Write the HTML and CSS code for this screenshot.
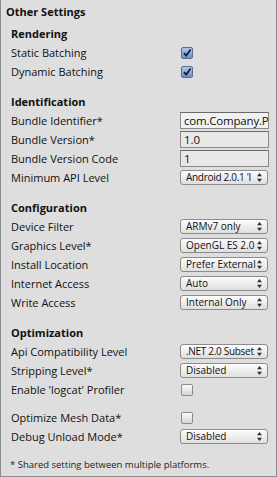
FILE: index.html
```html
<!DOCTYPE html>
<html lang="en">
<head>
    <meta charset="UTF-8">
    <title>Other Settings</title>
    <link rel="stylesheet" href="styles.css">
</head>
<body>
    <div id="panel">
        <div class="title">Other Settings</div>

        <div class="section">
            <div class="sectionHead">Rendering</div>
            <div class="row"><span class="label">Static Batching</span><span class="check on"><svg viewBox="0 0 12 12" width="12" height="12"><path d="M3 6.2 L5.2 8.6 L9.6 2.4" fill="none" stroke="#14213d" stroke-width="1.8"/></svg></span></div>
            <div class="row"><span class="label">Dynamic Batching</span><span class="check on"><svg viewBox="0 0 12 12" width="12" height="12"><path d="M3 6.2 L5.2 8.6 L9.6 2.4" fill="none" stroke="#14213d" stroke-width="1.8"/></svg></span></div>
        </div>

        <div class="section">
            <div class="sectionHead">Identification</div>
            <div class="row"><span class="label">Bundle Identifier*</span><span class="field active">com.Company.P</span></div>
            <div class="row"><span class="label">Bundle Version*</span><span class="field">1.0</span></div>
            <div class="row"><span class="label">Bundle Version Code</span><span class="field">1</span></div>
            <div class="row"><span class="label">Minimum API Level</span><span class="popup"><span class="popupText tight">Android 2.0.1 'I</span><svg class="arrows" viewBox="0 0 5 9" width="5" height="9"><path d="M2.5 0 L5 3.2 L0 3.2 Z M2.5 9 L5 5.8 L0 5.8 Z" fill="#333"/></svg></span></div>
        </div>

        <div class="section">
            <div class="sectionHead">Configuration</div>
            <div class="row"><span class="label">Device Filter</span><span class="popup"><span class="popupText">ARMv7 only</span><svg class="arrows" viewBox="0 0 5 9" width="5" height="9"><path d="M2.5 0 L5 3.2 L0 3.2 Z M2.5 9 L5 5.8 L0 5.8 Z" fill="#333"/></svg></span></div>
            <div class="row"><span class="label">Graphics Level*</span><span class="popup"><span class="popupText">OpenGL ES 2.0</span><svg class="arrows" viewBox="0 0 5 9" width="5" height="9"><path d="M2.5 0 L5 3.2 L0 3.2 Z M2.5 9 L5 5.8 L0 5.8 Z" fill="#333"/></svg></span></div>
            <div class="row"><span class="label">Install Location</span><span class="popup"><span class="popupText">Prefer External</span><svg class="arrows" viewBox="0 0 5 9" width="5" height="9"><path d="M2.5 0 L5 3.2 L0 3.2 Z M2.5 9 L5 5.8 L0 5.8 Z" fill="#333"/></svg></span></div>
            <div class="row"><span class="label">Internet Access</span><span class="popup"><span class="popupText">Auto</span><svg class="arrows" viewBox="0 0 5 9" width="5" height="9"><path d="M2.5 0 L5 3.2 L0 3.2 Z M2.5 9 L5 5.8 L0 5.8 Z" fill="#333"/></svg></span></div>
            <div class="row"><span class="label">Write Access</span><span class="popup"><span class="popupText">Internal Only</span><svg class="arrows" viewBox="0 0 5 9" width="5" height="9"><path d="M2.5 0 L5 3.2 L0 3.2 Z M2.5 9 L5 5.8 L0 5.8 Z" fill="#333"/></svg></span></div>
        </div>

        <div class="section">
            <div class="sectionHead">Optimization</div>
            <div class="row"><span class="label">Api Compatibility Level</span><span class="popup"><span class="popupText tight">.NET 2.0 Subset</span><svg class="arrows" viewBox="0 0 5 9" width="5" height="9"><path d="M2.5 0 L5 3.2 L0 3.2 Z M2.5 9 L5 5.8 L0 5.8 Z" fill="#333"/></svg></span></div>
            <div class="row"><span class="label">Stripping Level*</span><span class="popup"><span class="popupText">Disabled</span><svg class="arrows" viewBox="0 0 5 9" width="5" height="9"><path d="M2.5 0 L5 3.2 L0 3.2 Z M2.5 9 L5 5.8 L0 5.8 Z" fill="#333"/></svg></span></div>
            <div class="row"><span class="label">Enable 'logcat' Profiler</span><span class="check"></span></div>
        </div>

        <div class="section small">
            <div class="row"><span class="label">Optimize Mesh Data*</span><span class="check"></span></div>
            <div class="row"><span class="label">Debug Unload Mode*</span><span class="popup"><span class="popupText">Disabled</span><svg class="arrows" viewBox="0 0 5 9" width="5" height="9"><path d="M2.5 0 L5 3.2 L0 3.2 Z M2.5 9 L5 5.8 L0 5.8 Z" fill="#333"/></svg></span></div>
        </div>

        <div class="footnote">* Shared setting between multiple platforms.</div>
    </div>
</body>
</html>
```

FILE: styles.css
```css
body {
    margin: 0;
    background-color: #dedede;
    font-family: "Open Sans", sans-serif;
    font-size: 11px;
    color: #111;
}

#panel {
    width: 277px;
    height: 477px;
    box-sizing: border-box;
    border: 1px solid #8c8c8c;
    border-top: none;
    background-color: #dedede;
    padding-top: 2px;
}

.title {
    height: 19px;
    line-height: 19px;
    padding-left: 5px;
    font-weight: bold;
    margin-bottom: 4px;
}

.section {
    margin-bottom: 12px;
}

.section.small {
    margin-top: -3px;
    margin-bottom: 12px;
}

.sectionHead {
    height: 18px;
    line-height: 18px;
    padding-left: 10px;
    font-weight: bold;
}

.row {
    display: flex;
    align-items: center;
    height: 19px;
    padding-left: 10px;
}

.label {
    width: 169px;
    flex-shrink: 0;
    line-height: 19px;
    white-space: nowrap;
}

.check {
    width: 12px;
    height: 12px;
    margin-left: 1px;
    margin-top: 1px;
    box-sizing: border-box;
    border: 1px solid #8a8a8a;
    border-radius: 2px;
    background: linear-gradient(#fcfcfc, #d4d4d4);
    position: relative;
}

.check.on {
    border-color: #5b6f90;
    background: linear-gradient(#b3c8e6, #6c8fc4);
}

.check svg {
    position: absolute;
    left: -1px;
    top: -1px;
}

.field {
    width: 89px;
    height: 17px;
    box-sizing: border-box;
    border: 1px solid #8a8a8a;
    border-top-color: #6a6a6a;
    background-color: #e8e8e8;
    padding-left: 3px;
    font-size: 11.5px;
    line-height: 15px;
    white-space: nowrap;
    overflow: hidden;
}

.field.active {
    background-color: #f1f1f1;
    letter-spacing: -0.2px;
}

.popup {
    width: 88px;
    height: 15px;
    box-sizing: border-box;
    border: 1px solid #8c8c8c;
    border-radius: 3px;
    background: linear-gradient(#fdfdfd, #dfdfdf);
    display: flex;
    align-items: center;
    padding-left: 5px;
    padding-right: 5px;
    font-size: 10px;
}

.popupText {
    flex-grow: 1;
    white-space: nowrap;
    overflow: hidden;
    line-height: 13px;
}

.popupText.tight {
    letter-spacing: -0.3px;
}

.arrows {
    flex-shrink: 0;
    margin-left: 1px;
}

.footnote {
    padding-left: 9px;
    font-size: 9.5px;
    color: #222;
}
```
